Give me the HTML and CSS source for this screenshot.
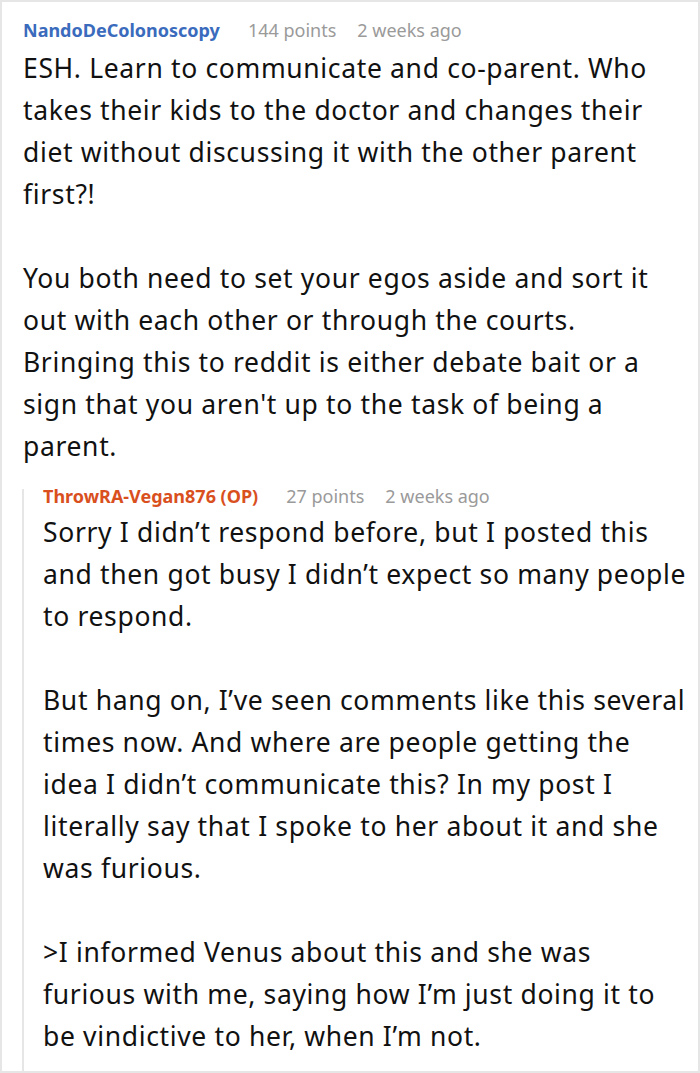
FILE: index.html
```html
<!DOCTYPE html>
<html>
<head>
<meta charset="utf-8">
<link rel="stylesheet" href="styles.css">
</head>
<body>
<div class="frame">
  <div class="comment">
    <div class="meta">
      <span class="user">NandoDeColonoscopy</span>
      <span class="info">144 points</span>
      <span class="info">2 weeks ago</span>
    </div>
    <div class="body">
      <p>ESH. Learn to communicate and co-parent. Who takes their kids to the doctor and changes their diet without discussing it with the other parent first?!</p>
      <p>You both need to set your egos aside and sort it out with each other or through the courts. Bringing this to reddit is either debate bait or a sign that you aren't up to the task of being a parent.</p>
    </div>
    <div class="reply">
      <div class="meta">
        <span class="user op">ThrowRA-Vegan876 (OP)</span>
        <span class="info">27 points</span>
        <span class="info">2 weeks ago</span>
      </div>
      <div class="body">
        <p>Sorry I didn’t respond before, but I posted this and then got busy I didn’t expect so many people to respond.</p>
        <p>But hang on, I’ve seen comments like this several times now. And where are people getting the idea I didn’t communicate this? In my post I literally say that I spoke to her about it and she was furious.</p>
        <p>&gt;I informed Venus about this and she was furious with me, saying how I’m just doing it to be vindictive to her, when I’m not.</p>
      </div>
    </div>
  </div>
</div>
</body>
</html>
```

FILE: styles.css
```css
html, body {
  margin: 0;
  padding: 0;
  background: #ffffff;
}
.frame {
  box-sizing: border-box;
  width: 700px;
  height: 1073px;
  border: 2px solid #e6e6e6;
  overflow: hidden;
  padding: 21px 9px 0 21px;
  font-family: "Noto Sans", sans-serif;
  color: #111111;
}
.meta {
  display: flex;
  gap: 21px;
  font-size: 18px;
  line-height: 14px;
  height: 14px;
}
.user {
  font-weight: bold;
  color: #3a6bbd;
  margin-right: 7px;
}
.user.op {
  color: #d9501e;
}
.info {
  color: #9a9a9a;
}
.body {
  font-size: 26.5px;
  letter-spacing: 0.65px;
  line-height: 42px;
  margin-top: 10px;
}
.body p {
  margin: 0 0 42px 0;
}
.body p:last-child {
  margin-bottom: 0;
}
.reply {
  margin-top: 22px;
  margin-left: -1px;
  border-left: 2px solid #e6e6e6;
  padding-left: 19px;
  padding-bottom: 60px;
}
.reply .body {
  margin-top: 8px;
}
```
